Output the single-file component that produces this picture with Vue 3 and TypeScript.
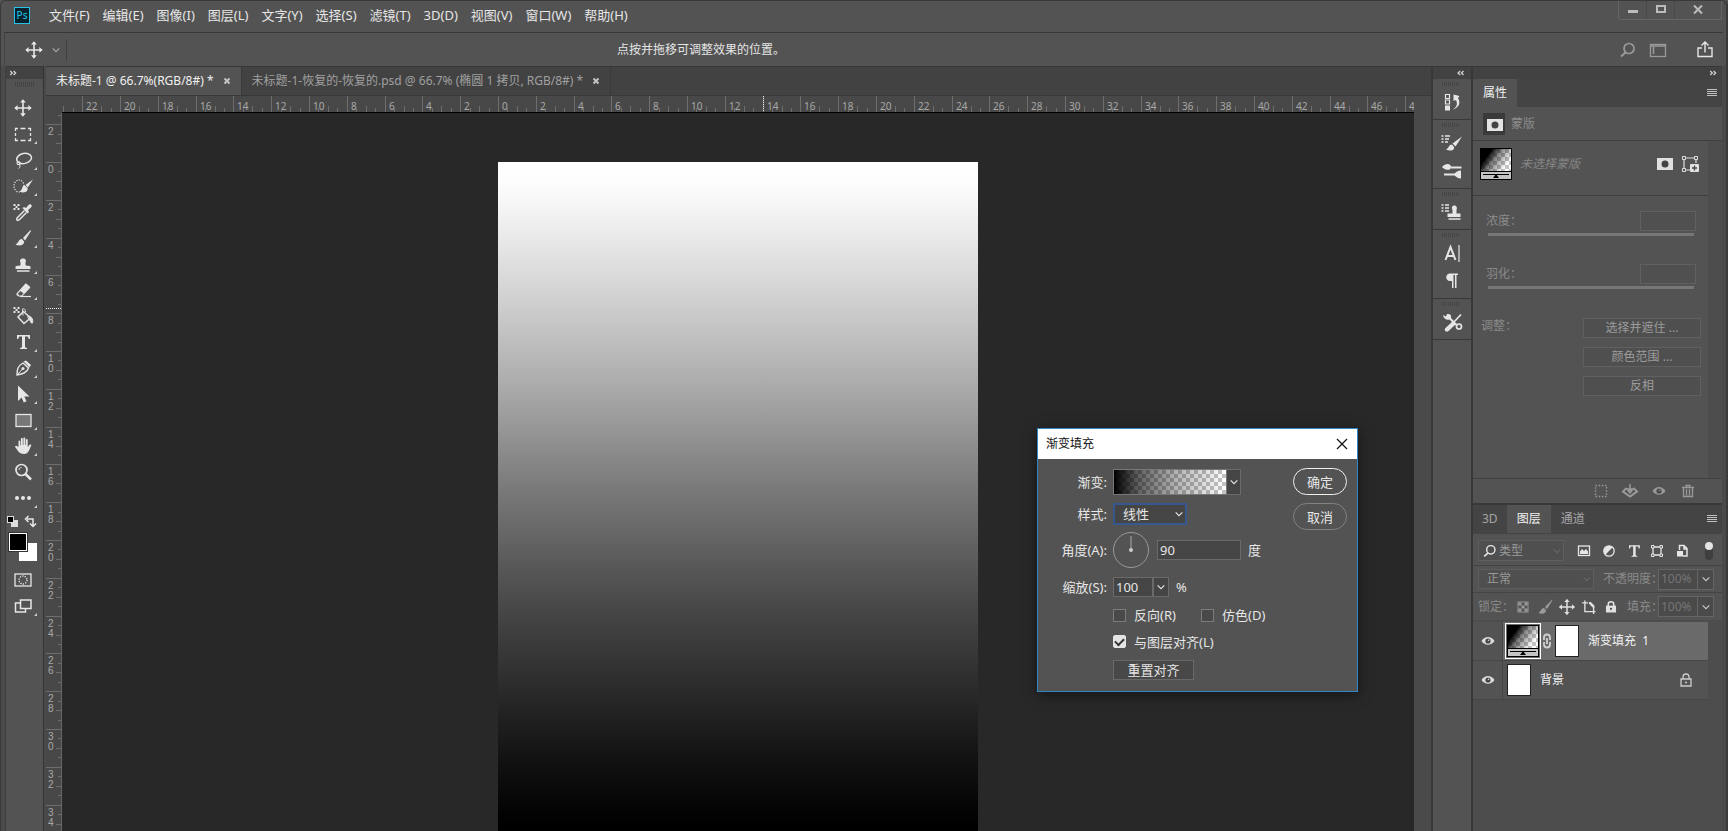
<script setup lang="ts">
import { computed, onBeforeUnmount, onMounted, ref } from 'vue'

const icons: Record<string, string> = {
  move: '<path d="M12 4v16M4 12h16" stroke="currentColor" stroke-width="1.6"/><path d="M12 1.500l3.500 4h-7zM12 22.500l3.500-4h-7zM1.500 12l4-3.500v7zM22.500 12l-4-3.500v7z" transform="translate(2 2) scale(.83)" fill="currentColor"/>',
  marquee: '<path d="M4.500 9V6.500H7M9.500 6.500h5M17 6.500h2.500V9M4.500 11v3M19.500 11v3M4.500 16v2.500H7M9.500 18.500h5M17 18.500h2.500V16" stroke="currentColor" stroke-width="1.300" fill="none"/>',
  lasso: '<ellipse cx="13" cy="10.500" rx="7.500" ry="5" transform="rotate(-12 13 10)" stroke="currentColor" stroke-width="1.500" fill="none"/><circle cx="7.500" cy="15" r="1.600" stroke="currentColor" fill="none"/><path d="M6 16.500h3.500M8.500 16.500c1 2 .5 3-1 4" stroke="currentColor" fill="none"/>',
  quick: '<ellipse cx="8" cy="12" rx="5" ry="6" stroke="currentColor" stroke-width="1.200" stroke-dasharray="1.200 1.300" fill="none"/><path d="M22 5.500l-7.500 5.500 2.300 2.500z" fill="currentColor"/><path d="M14 11.500c-4 .5-1.500 4-5.500 6 4.500 2 9 .5 8-3.500z" fill="currentColor"/>',
  dropper: '<path d="M2.500 4h2v2h2V4h2v2h-2v2h2v2h-2V8h-2v2h-2V8h2V6h-2z" fill="currentColor"/><path d="M13.500 10.500l-7 7c-.8.800-1 2-.5 2.500s1.700.3 2.500-.5l7-7" stroke="currentColor" stroke-width="1.500" fill="none"/><path d="M11.500 8l1.500-1 2 1 2.500-3c2-2 4.500.5 2.500 2.500l-3 2.500 1 2-1.500 1.500z" fill="currentColor"/>',
  brush: '<path d="M19.500 4L12 12l2 2.500L20 5z" fill="currentColor"/><path d="M11 13c-3.500-.3-3 4-6.500 5.500 4.500 2 9 .5 8.500-3z" fill="currentColor"/>',
  stamp: '<path d="M9.500 10.500C7 5 17 5 14.500 10.500v2.500c0 1 4 .5 5 1.500v2.500h-15v-2.500c1-1 5-.5 5-1.500z" fill="currentColor"/><path d="M6 19h12.500" stroke="currentColor" stroke-width="1.500"/>',
  eraser: '<path d="M5.500 15.500L14 6c.6-.6 1.200-.6 1.800 0l3 2.500c.6.600.6 1.200 0 1.800L11 18.500H7.500l-2-1.500z" fill="currentColor"/><path d="M7 15.500l2.500-2.500 3 2.500L10.500 17.500H8z" fill="#535353"/><path d="M9 18.500h11" stroke="currentColor" stroke-width="1.200"/>',
  bucket: '<path d="M2.500 3h2v2h2V3h2v2h-2v2h2v2h-2V7h-2v2h-2V7h2V5h-2z" fill="currentColor"/><path d="M12.500 7.500l7 6.500-6.500 5.500-6-6.500z" stroke="currentColor" stroke-width="1.500" fill="none"/><path d="M12 11.500L11.500 5c1.500-1 3 .5 3 3M17 12c3 0 5.500 3 4.500 7-2 1-2-3-4.500-5z" stroke="currentColor" fill="none"/><path d="M18.500 12.500c3 1 3.500 4 3 6.500-2 .5-2-2.500-3-4z" fill="currentColor"/>',
  type: '<path d="M6 5h13v4h-1.300c-.3-2-.7-2.400-2.200-2.400h-1.500v10c0 1 .5 1.200 2 1.400V19H9v-1c1.500-.2 2-.4 2-1.400v-10H9.500c-1.500 0-1.900.4-2.200 2.400H6z" fill="currentColor"/>',
  pen: '<path d="M6 19c0-5 .5-9 6-12l5.500 5C16 17 11 18 6 19z" stroke="currentColor" stroke-width="1.400" fill="none"/><path d="M12.500 5.500L15 4.500 20 9l-1.500 2.500z" fill="currentColor"/><path d="M6 19l5.500-6" stroke="currentColor"/><circle cx="12" cy="12.500" r="1.500" fill="currentColor"/>',
  arrow: '<path d="M7 3.500v15.500l3.600-3.600 2.200 5.100 2.700-1.200-2.200-4.800h5.200z" fill="currentColor"/>',
  rect: '<rect x="5" y="6.500" width="15" height="12" stroke="currentColor" stroke-width="1.300" fill="#777"/>',
  hand: '<path d="M7.500 13V7.500c0-1.200 1.800-1.200 1.800 0v3.700h.6V5c0-1.200 1.900-1.200 1.900 0v6h.6V4.500c0-1.200 1.900-1.200 1.900 0V11h.6V6c0-1.200 1.800-1.200 1.800 0v7c.8-.4 1.200-2 2.300-2.500 1-.4 1.500.3 1.100 1.200-1.500 3-2.500 8.300-7 8.300-5 0-6-3-8.800-6.700-.8-1 .6-2 1.500-1.200z" fill="currentColor"/>',
  zoom: '<circle cx="10.500" cy="10" r="5.500" stroke="currentColor" stroke-width="1.700" fill="none"/><path d="M8 10c0-1.500 1-2.500 2.500-2.500" stroke="currentColor" fill="none"/><path d="M14.500 14l5.500 5.500" stroke="currentColor" stroke-width="2.500"/>',
  dots: '<circle cx="6" cy="12" r="2" fill="currentColor"/><circle cx="12" cy="12" r="2" fill="currentColor"/><circle cx="18" cy="12" r="2" fill="currentColor"/>',
  quickmask: '<rect x="4" y="6" width="16" height="12" stroke="currentColor" stroke-width="1.300" fill="none"/><circle cx="12" cy="12" r="4" stroke="currentColor" stroke-width="1.300" stroke-dasharray="1.300 1.200" fill="none"/>',
  screen: '<rect x="4.500" y="9" width="10" height="9" stroke="currentColor" stroke-width="1.500" fill="none"/><rect x="9.500" y="6" width="10.500" height="8.500" stroke="currentColor" stroke-width="1.500" fill="#535353"/>',
  history: '<path d="M5.500 4.500h4v4h-4zM5.500 10h4v4h-4z" stroke="currentColor" stroke-width="1.200" fill="none"/><path d="M5 15.500h5v5H5z" fill="currentColor"/><path d="M13 19.500c4.500-3 4.500-6 3-9.500l-2.500 1V4.500l6 1.500-1.500 2c3 5 1 9.500-5 11.500z" fill="currentColor"/>',
  brushset: '<path d="M1.500 5h2M5 5h5M1.500 8h2M5 8h4M1.500 11h2M5 11h3" stroke="currentColor" stroke-width="1.500"/><path d="M22 5.500l-9.500 7 3 3z" fill="currentColor"/><path d="M12 13.500c-3.500 0-2.500 3.500-6 5 4.500 2 9 1 8-2.500z" fill="currentColor"/>',
  brushes: '<path d="M2 8c3-4 9-4 9 0s-6 3.500-9 0z" fill="currentColor"/><path d="M11 8.500h10.500M4 15.500h11" stroke="currentColor" stroke-width="2"/><path d="M14 15.500c1-2 4-4 7-4v8c-3 0-6-2-7-4z" fill="currentColor"/>',
  clone: '<path d="M1.500 5h2M5 5h4M1.500 8h2M5 8h4M1.500 11h2M5 11h4" stroke="currentColor" stroke-width="1.500"/><path d="M12.500 10c-3-6 6.500-6 4 0v3.500h4V17h-13v-3.500h5z" fill="currentColor"/><path d="M8.500 19h12" stroke="currentColor" stroke-width="1.500"/>',
  character: '<path d="M5.500 19L10.500 6l5 13M7.500 15h6" stroke="currentColor" stroke-width="2" fill="none"/><path d="M19 4v17" stroke="currentColor" stroke-width="1.200"/>',
  paragraph: '<path d="M18 4.500H10c-5 0-5 7.500 0 7.500h2V19h1.500V6H15v13h1.500V6H18z" fill="currentColor"/>',
  wrench: '<path d="M21 4.500l-8 8.500" stroke="currentColor" stroke-width="1.700"/><path d="M12.500 11.500l3 3-7 6.500c-2.500 2-5-1-3-3zM3 5l3 1.500L7 4c4-.5 4.500 2 4 4l6 6-1.500 1.500-6-6c-3 1-6-1-6.500-4.500z" fill="currentColor"/><circle cx="19" cy="16.500" r="2.500" stroke="currentColor" stroke-width="1.700" fill="none"/>',
  search: '<circle cx="13" cy="10.500" r="5" stroke="currentColor" stroke-width="1.700" fill="none"/><path d="M9.500 14.500l-4.500 4" stroke="currentColor" stroke-width="2"/>',
  workspace: '<rect x="4.500" y="6.500" width="15" height="12" stroke="currentColor" stroke-width="1.300" fill="none"/><path d="M7.500 9v7M5 8h14" stroke="currentColor" stroke-width="1.500"/>',
  share: '<path d="M9 10H5v8.500h14V10h-4M12 14.500V4M8.500 7.500L12 4l3.500 3.500" stroke="currentColor" stroke-width="1.400" fill="none"/>',
  mask: '<rect x="4" y="6" width="16" height="12" fill="currentColor"/><circle cx="12" cy="12" r="3.500" fill="#444"/>',
  vector: '<path d="M6 8v8M8 6h9M18 8v3M8 18h4" stroke="currentColor" stroke-width="1.200"/><path d="M4.500 4.500h3v3h-3zM16.500 4.500h3v3h-3zM4.500 16.500h3v3h-3z" stroke="currentColor" fill="none"/><rect x="12" y="12" width="9" height="8" rx="1" fill="currentColor"/><path d="M16.500 13.500v5M14 16h5" stroke="#444" stroke-width="1.300"/>',
  loadsel: '<rect x="6.500" y="6.500" width="11" height="11" stroke="currentColor" stroke-width="1.400" stroke-dasharray="1.500 1.643" fill="none"/>',
  apply: '<path d="M8.500 9L5 12.500l7 5 7-5L15.500 9" stroke="currentColor" stroke-width="2" fill="none"/><path d="M12 5v7M9 10l3 4 3-4z" stroke="currentColor" stroke-width="1.500" fill="currentColor"/>',
  eye: '<path d="M5.500 12c3.500-5.500 9.500-5.500 13 0-3.500 5-9.500 5-13 0z" fill="currentColor"/><circle cx="12" cy="12" r="2.600" fill="#484848"/><circle cx="12.600" cy="11.300" r=".8" fill="currentColor"/>',
  trash: '<path d="M6 8.500h12M10 8V6.500h4V8M7.500 9v8.500h9V9M10.500 10v6.500M13.500 10v6.500" stroke="currentColor" stroke-width="1.300" fill="none"/>',
  pixel: '<rect x="6.500" y="7" width="11" height="9.500" stroke="currentColor" stroke-width="1.300" fill="none"/><path d="M8 15v-2.500l2-2.500 2 2 2-2 2 2.500V15z" fill="currentColor"/>',
  adjust: '<circle cx="12" cy="12" r="5.200" fill="none" stroke="currentColor" stroke-width="1.300"/><path d="M15.700 8.300A5.200 5.200 0 1 0 8.300 15.700z" fill="currentColor"/>',
  shape: '<path d="M8 8h8v8H8z" stroke="currentColor" stroke-width="1.300" fill="none"/><path d="M6.500 6.500h2.500V9H6.500zM15 6.500h2.500V9H15zM6.500 15h2.500v2.500H6.500zM15 15h2.500v2.500H15z" stroke="currentColor" fill="#535353"/>',
  smart: '<path d="M9.500 11V6.500H14l3 3v7.500h-4M14 6.500V10h3" stroke="currentColor" stroke-width="1.500" fill="none"/><rect x="7" y="12" width="6" height="5.500" fill="currentColor"/>',
  checker: '<rect x="6.500" y="6.500" width="11" height="11" fill="none" stroke="currentColor"/><path d="M7 7h3.300v3.300H7zM13.700 7H17v3.300h-3.300zM10.300 10.300h3.400v3.400h-3.400zM7 13.700h3.300V17H7zM13.700 13.700H17V17h-3.300z" fill="currentColor"/>',
  crop: '<path d="M7.500 5v12h11.500M4.500 7.500H11M17 13v6.500" stroke="currentColor" stroke-width="1.500" fill="none"/><path d="M12 6.500h2l4 4v2.500h-1.500l-4.500-4.500z" fill="currentColor"/>',
  lock: '<path d="M9 11V9c0-3.500 6-3.500 6 0v2" stroke="currentColor" stroke-width="1.700" fill="none"/><path d="M6.500 10.500h11V18h-11z" fill="currentColor"/><circle cx="12" cy="14" r="1.200" fill="#444"/>',
  lockline: '<path d="M9 11V9c0-4 6-4 6 0v2M7 11h10v7H7z" stroke="currentColor" stroke-width="1.300" fill="none"/><circle cx="12" cy="14.500" r="1" fill="currentColor"/>',
  link: '<path d="M9 11V8.500c0-4 6-4 6 0V11M9 13v2.500c0 4 6 4 6 0V13M12 9v6" stroke="currentColor" stroke-width="1.800" fill="none"/>',
  chevron: '<path d="M8 10l4 4 4-4" stroke="currentColor" stroke-width="1.300" fill="none"/>',
  fast: '<path d="M7.500 9.500l2.500 2.500-2.500 2.500M11.500 9.500L14 12l-2.500 2.500" stroke="currentColor" stroke-width="1.600" fill="none"/>',
  rewind: '<path d="M11 9.500L8.500 12l2.500 2.500M15 9.500L12.500 12l2.500 2.500" stroke="currentColor" stroke-width="1.600" fill="none"/>',
  menu: '<path d="M7 8.500h10M7 10.500h10M7 12.500h10M7 14.500h10" stroke="currentColor"/>',
  swap: '<path d="M9 9h6v6M10.500 6L7.500 9l3 3M12 13.500l3 3 3-3" stroke="currentColor" stroke-width="1.500" fill="none"/>',
  defaults: '<rect x="10" y="10" width="7" height="7" fill="#ddd"/><rect x="6.500" y="6.500" width="6" height="6" fill="#000" stroke="#ddd"/>',
  close: '<path d="M9.500 9.500l5 5M14.500 9.500l-5 5" stroke="currentColor" stroke-width="2"/>',
  winmin: '<rect x="7" y="12" width="10" height="3" fill="currentColor"/>',
  winmax: '<rect x="8" y="8" width="8" height="6" stroke="currentColor" stroke-width="2" fill="none"/>',
  winclose: '<path d="M8 7.500l8 8M16 7.500l-8 8" stroke="currentColor" stroke-width="2"/>',
  cross: '<path d="M7 7l10 10M17 7L7 17" stroke="currentColor" stroke-width="1.200"/>',
}

const menus = ['文件(F)', '编辑(E)', '图像(I)', '图层(L)', '文字(Y)', '选择(S)', '滤镜(T)', '3D(D)', '视图(V)', '窗口(W)', '帮助(H)']

interface Tool { icon: string; label: string; more: boolean }
const tools: Tool[] = [
  { icon: 'move', label: '移动工具', more: false },
  { icon: 'marquee', label: '矩形选框工具', more: true },
  { icon: 'lasso', label: '套索工具', more: true },
  { icon: 'quick', label: '快速选择工具', more: true },
  { icon: 'dropper', label: '吸管工具', more: false },
  { icon: 'brush', label: '画笔工具', more: true },
  { icon: 'stamp', label: '仿制图章工具', more: true },
  { icon: 'eraser', label: '橡皮擦工具', more: true },
  { icon: 'bucket', label: '油漆桶工具', more: false },
  { icon: 'type', label: '横排文字工具', more: true },
  { icon: 'pen', label: '钢笔工具', more: true },
  { icon: 'arrow', label: '路径选择工具', more: true },
  { icon: 'rect', label: '矩形工具', more: true },
  { icon: 'hand', label: '抓手工具', more: true },
  { icon: 'zoom', label: '缩放工具', more: false },
  { icon: 'dots', label: '编辑工具栏', more: true },
]
const dock = [['history'], ['brushset', 'brushes'], ['clone'], ['character', 'paragraph'], ['wrench']]

const DOC_WIDTH = 480
const DOC_TOP = 49
const STEP = 37.8

const stage = ref<HTMLElement | null>(null)
const stageWidth = ref(1351)
const stageHeight = ref(718)
let observer: ResizeObserver | undefined
onMounted(() => {
  const el = stage.value
  if (!el) return
  observer = new ResizeObserver(() => {
    stageWidth.value = el.clientWidth
    stageHeight.value = el.clientHeight
  })
  observer.observe(el)
})
onBeforeUnmount(() => observer?.disconnect())

interface Tick { pos: number; label: string; size: number }
function ticks(zero: number, length: number): Tick[] {
  const list: Tick[] = []
  const first = Math.ceil((-zero / STEP) * 4)
  const last = Math.floor(((length - zero) / STEP) * 4)
  for (let i = first; i <= last; i++) {
    const major = i % 4 === 0
    list.push({
      pos: Math.round(zero + (i * STEP) / 4),
      label: major ? String(Math.abs(i / 4) * 2) : '',
      size: major ? 16 : i % 2 === 0 ? 6 : 4,
    })
  }
  return list
}
const hTicks = computed(() => ticks((stageWidth.value - DOC_WIDTH) / 2, stageWidth.value))
const vTicks = computed(() => ticks(DOC_TOP, stageHeight.value))

const density = ref('')
const feather = ref('')
const angle = ref('90')
const scale = ref('100')
const reverse = ref(false)
const dither = ref(false)
const align = ref(true)
</script>

<template>
  <div class="app">
    <header class="menubar">
      <span class="logo">Ps</span>
      <nav class="menus">
        <button v-for="m in menus" :key="m" type="button">{{ m }}</button>
      </nav>
      <div class="window-controls">
        <button type="button" aria-label="最小化"><svg viewBox="0 0 24 24" v-html="icons.winmin" /></button>
        <button type="button" aria-label="最大化"><svg viewBox="0 0 24 24" v-html="icons.winmax" /></button>
        <button type="button" class="wide" aria-label="关闭"><svg viewBox="0 0 24 24" v-html="icons.winclose" /></button>
      </div>
    </header>

    <div class="options">
      <button type="button" class="current-tool" aria-label="移动工具">
        <svg viewBox="0 0 24 24" v-html="icons.move" />
        <svg class="arrow-down" viewBox="0 0 24 24" v-html="icons.chevron" />
      </button>
      <p class="hint">点按并拖移可调整效果的位置。</p>
      <div class="option-actions">
        <button type="button" class="dim" aria-label="搜索"><svg viewBox="0 0 24 24" v-html="icons.search" /></button>
        <button type="button" class="dim" aria-label="工作区"><svg viewBox="0 0 24 24" v-html="icons.workspace" /></button>
        <button type="button" class="share" aria-label="共享"><svg viewBox="0 0 24 24" v-html="icons.share" /></button>
      </div>
    </div>

    <div class="workspace">
      <aside class="toolbar">
        <div class="strip"><svg viewBox="0 0 24 24" v-html="icons.fast" /></div>
        <div class="grip"></div>
        <button v-for="t in tools" :key="t.icon" type="button" class="tool" :class="{ more: t.more }" :aria-label="t.label">
          <svg viewBox="0 0 24 24" v-html="icons[t.icon]" />
        </button>
        <div class="color-tools">
          <button type="button" aria-label="默认颜色"><svg viewBox="0 0 24 24" v-html="icons.defaults" /></button>
          <button type="button" aria-label="切换颜色"><svg viewBox="0 0 24 24" v-html="icons.swap" /></button>
        </div>
        <div class="swatches">
          <button type="button" class="swatch back" aria-label="背景色"></button>
          <button type="button" class="swatch fore" aria-label="前景色"></button>
        </div>
        <button type="button" class="tool" aria-label="快速蒙版"><svg viewBox="0 0 24 24" v-html="icons.quickmask" /></button>
        <button type="button" class="tool more" aria-label="屏幕模式"><svg viewBox="0 0 24 24" v-html="icons.screen" /></button>
      </aside>

      <main class="editor">
        <div class="doc-tabs">
          <div class="doc-tab active">
            <span>未标题-1 @ 66.7%(RGB/8#) *</span>
            <button type="button" aria-label="关闭标签"><svg viewBox="0 0 24 24" v-html="icons.close" /></button>
          </div>
          <div class="doc-tab">
            <span>未标题-1-恢复的-恢复的.psd @ 66.7% (椭圆 1 拷贝, RGB/8#) *</span>
            <button type="button" aria-label="关闭标签"><svg viewBox="0 0 24 24" v-html="icons.close" /></button>
          </div>
        </div>
        <div class="view">
          <div class="corner"></div>
          <svg class="ruler-h">
            <g v-for="t in hTicks" :key="t.pos">
              <line :x1="t.pos + 0.5" :x2="t.pos + 0.5" :y1="16 - t.size" y2="16" />
              <text v-if="t.label" :x="t.pos + 4" y="14">{{ t.label }}</text>
            </g>
            <line class="marker" x1="701.5" x2="701.5" y1="0" y2="16" />
          </svg>
          <svg class="ruler-v">
            <g v-for="t in vTicks" :key="t.pos">
              <line :x1="16 - t.size" x2="16" :y1="t.pos + 0.5" :y2="t.pos + 0.5" />
              <text v-if="t.label"><tspan v-for="(c, i) in t.label" :key="i" x="2" :y="t.pos + 11 + i * 10">{{ c }}</tspan></text>
            </g>
            <line class="marker" x1="0" x2="16" y1="195.5" y2="195.5" />
          </svg>
          <div ref="stage" class="stage">
            <div class="document"></div>
            <form class="dialog" @submit.prevent>
              <div class="dialog-title">
                <h2>渐变填充</h2>
                <button type="button" aria-label="关闭"><svg viewBox="0 0 24 24" v-html="icons.cross" /></button>
              </div>
              <div class="dialog-body">
                <div class="fields">
                  <span class="label">渐变:</span>
                  <div class="row">
                    <button type="button" class="gradient" aria-label="编辑渐变"></button>
                    <button type="button" class="drop tall" aria-label="选择渐变"><svg viewBox="0 0 24 24" v-html="icons.chevron" /></button>
                  </div>
                  <label class="label" for="style">样式:</label>
                  <div class="row">
                    <div class="select focus">
                      <select id="style"><option>线性</option></select>
                      <svg viewBox="0 0 24 24" v-html="icons.chevron" />
                    </div>
                  </div>
                  <label class="label" for="angle">角度(A):</label>
                  <div class="row">
                    <svg class="dial" viewBox="0 0 36 36">
                      <circle cx="18" cy="18" r="17.5" fill="none" stroke="#999" />
                      <path d="M18 4v14" stroke="#aaa" />
                      <circle cx="18" cy="18" r="2" fill="#ccc" />
                    </svg>
                    <input id="angle" v-model="angle" class="angle" type="text" />
                    <span class="unit">度</span>
                  </div>
                  <label class="label" for="scale">缩放(S):</label>
                  <div class="row">
                    <input id="scale" v-model="scale" class="scale" type="text" />
                    <button type="button" class="drop" aria-label="缩放值"><svg viewBox="0 0 24 24" v-html="icons.chevron" /></button>
                    <span class="unit">%</span>
                  </div>
                  <div class="row full">
                    <label class="check first"><input v-model="reverse" type="checkbox" />反向(R)</label>
                    <label class="check"><input v-model="dither" type="checkbox" />仿色(D)</label>
                  </div>
                  <div class="row full">
                    <label class="check"><input v-model="align" type="checkbox" />与图层对齐(L)</label>
                  </div>
                  <div class="row full"><button type="button" class="reset">重置对齐</button></div>
                </div>
                <div class="dialog-actions">
                  <button type="submit" class="primary">确定</button>
                  <button type="button">取消</button>
                </div>
              </div>
            </form>
          </div>
        </div>
      </main>

      <aside class="dock">
        <div class="strip end"><svg viewBox="0 0 24 24" v-html="icons.rewind" /></div>
        <div v-for="(group, g) in dock" :key="g" class="dock-group">
          <button v-for="name in group" :key="name" type="button" :aria-label="name"><svg viewBox="0 0 24 24" v-html="icons[name]" /></button>
        </div>
      </aside>

      <aside class="panels">
        <div class="strip end"><svg viewBox="0 0 24 24" v-html="icons.fast" /></div>
        <section class="properties">
          <div class="panel-tabs">
            <button type="button" class="active">属性</button>
            <button type="button" class="panel-menu" aria-label="面板菜单"><svg viewBox="0 0 24 24" v-html="icons.menu" /></button>
          </div>
          <div class="mask-kind">
            <span class="mask-badge"><svg viewBox="0 0 24 24" v-html="icons.mask" /></span>
            <span>蒙版</span>
          </div>
          <div class="prop-body">
            <div class="mask-target">
              <span class="thumb"><i class="thumb-gradient"></i><i class="thumb-slider"></i></span>
              <em>未选择蒙版</em>
              <button type="button" aria-label="添加像素蒙版"><svg viewBox="0 0 24 24" v-html="icons.mask" /></button>
              <button type="button" aria-label="添加矢量蒙版"><svg viewBox="0 0 24 24" v-html="icons.vector" /></button>
            </div>
            <div class="slider-field">
              <label for="density">浓度：</label>
              <input id="density" v-model="density" type="text" disabled />
              <input type="range" aria-label="浓度" disabled />
            </div>
            <div class="slider-field">
              <label for="feather">羽化：</label>
              <input id="feather" v-model="feather" type="text" disabled />
              <input type="range" aria-label="羽化" disabled />
            </div>
            <div class="refine">
              <span>调整：</span>
              <div class="refine-buttons">
                <button type="button" disabled>选择并遮住 ...</button>
                <button type="button" disabled>颜色范围 ...</button>
                <button type="button" disabled>反相</button>
              </div>
            </div>
          </div>
          <div class="prop-footer">
            <button type="button" aria-label="载入选区"><svg viewBox="0 0 24 24" v-html="icons.loadsel" /></button>
            <button type="button" aria-label="应用蒙版"><svg viewBox="0 0 24 24" v-html="icons.apply" /></button>
            <button type="button" aria-label="停用蒙版"><svg viewBox="0 0 24 24" v-html="icons.eye" /></button>
            <button type="button" aria-label="删除蒙版"><svg viewBox="0 0 24 24" v-html="icons.trash" /></button>
          </div>
        </section>

        <section class="layers">
          <div class="panel-tabs">
            <button type="button" class="narrow">3D</button>
            <button type="button" class="active">图层</button>
            <button type="button">通道</button>
            <button type="button" class="panel-menu" aria-label="面板菜单"><svg viewBox="0 0 24 24" v-html="icons.menu" /></button>
          </div>
          <div class="filter-row">
            <div class="select kind">
              <svg class="glass" viewBox="0 0 24 24" v-html="icons.search" />
              <select aria-label="筛选类型" disabled><option>类型</option></select>
              <svg viewBox="0 0 24 24" v-html="icons.chevron" />
            </div>
            <div class="filters">
              <button v-for="n in ['pixel', 'adjust', 'type', 'shape', 'smart']" :key="n" type="button" :class="n" :aria-label="n"><svg viewBox="0 0 24 24" v-html="icons[n]" /></button>
            </div>
            <span class="toggle"><i></i></span>
          </div>
          <div class="blend-row">
            <div class="select blend">
              <select aria-label="混合模式" disabled><option>正常</option></select>
              <svg viewBox="0 0 24 24" v-html="icons.chevron" />
            </div>
            <label for="opacity">不透明度：</label>
            <div class="amount">
              <input id="opacity" type="text" value="100%" disabled />
              <button type="button" aria-label="不透明度滑块"><svg viewBox="0 0 24 24" v-html="icons.chevron" /></button>
            </div>
          </div>
          <div class="blend-row lock-row">
            <span class="lock-label">锁定：</span>
            <button v-for="n in ['checker', 'brush', 'move', 'crop', 'lock']" :key="n" type="button" :class="n" :aria-label="n"><svg viewBox="0 0 24 24" v-html="icons[n]" /></button>
            <label for="fill">填充：</label>
            <div class="amount">
              <input id="fill" type="text" value="100%" disabled />
              <button type="button" aria-label="填充滑块"><svg viewBox="0 0 24 24" v-html="icons.chevron" /></button>
            </div>
          </div>
          <ul class="layer-list">
            <li class="layer selected">
              <button type="button" class="vis" aria-label="可见性"><svg viewBox="0 0 24 24" v-html="icons.eye" /></button>
              <span class="thumb framed"><i class="thumb-gradient"></i><i class="thumb-slider"></i></span>
              <svg class="link" viewBox="4 0 16 24" v-html="icons.link" />
              <span class="sheet"></span>
              <span class="name">渐变填充&nbsp; 1</span>
            </li>
            <li class="layer">
              <button type="button" class="vis" aria-label="可见性"><svg viewBox="0 0 24 24" v-html="icons.eye" /></button>
              <span class="sheet"></span>
              <span class="name">背景</span>
              <svg class="locked" viewBox="0 0 24 24" v-html="icons.lockline" />
            </li>
          </ul>
        </section>
      </aside>
    </div>
  </div>
</template>

<style>
body {
  margin: 0;
  background: #535353;
}
</style>

<style scoped>
.app {
  box-sizing: border-box;
  display: flex;
  flex-direction: column;
  height: 100vh;
  overflow: hidden;
  border: solid #3a3a3a;
  border-width: 1px 2px 0 1px;
  border-radius: 6px 6px 0 0;
  background: #535353;
  color: #e6e6e6;
  font: 12px/16px "Noto Sans", "Noto Sans CJK SC", sans-serif;
}
.app * {
  box-sizing: border-box;
}
button,
input,
select {
  margin: 0;
  padding: 0;
  border: 0;
  border-radius: 0;
  background: none;
  color: inherit;
  font: inherit;
  appearance: none;
  outline: none;
  opacity: 1;
}
button {
  display: flex;
  align-items: center;
  justify-content: center;
  flex: none;
}
svg {
  display: block;
  flex: none;
  width: 24px;
  height: 24px;
}
.dim {
  color: #9a9a9a;
}

/* Menu bar */
.menubar {
  display: flex;
  align-items: flex-start;
  flex: none;
  height: 31px;
  padding: 0 4px 0 13px;
}
.logo {
  width: 16px;
  height: 17px;
  margin: 6px 19px 0 0;
  border: 1px solid #26c3e6;
  background: #07222c;
  color: #26c9ee;
  font-size: 10px;
  line-height: 15px;
  text-align: center;
}
.menus {
  display: flex;
  gap: 13px;
  height: 28px;
  font-size: 13px;
}
.window-controls {
  display: flex;
  height: 19px;
  margin-left: auto;
  border: solid #656565;
  border-width: 0 1px 1px;
  border-radius: 0 0 3px 3px;
  color: #bbb;
}
.window-controls button {
  width: 28px;
  border-right: 1px solid #494949;
}
.window-controls .wide {
  width: 46px;
  border: 0;
}

/* Options bar */
.options {
  display: flex;
  align-items: center;
  justify-content: space-between;
  flex: none;
  height: 34px;
  margin: 0 3px;
  padding: 0 6px 0 16px;
  border-top: 1px solid #383838;
  border-left: 1px solid #444;
}
.current-tool {
  width: 46px;
  height: 22px;
  border-right: 1px solid #404040;
}
.arrow-down {
  width: 20px;
  height: 20px;
  color: #aaa;
}
.hint {
  margin: 0 auto 0 550px;
}
.option-actions {
  display: flex;
  gap: 6px;
}
.option-actions .share {
  margin-left: 17px;
}

/* Workspace columns */
.workspace {
  display: flex;
  flex: 1;
  min-height: 0;
  padding: 0 4px;
  background: #4a4a4a;
}
.strip {
  display: flex;
  align-items: center;
  flex: none;
  height: 13px;
  border-top: 1px solid #383838;
  background: #424242;
  color: #d0d0d0;
}
.strip.end {
  justify-content: flex-end;
}
.strip svg {
  width: 20px;
  height: 20px;
}
.panels .strip svg {
  margin-right: -2px;
}
.toolbar {
  display: flex;
  flex-direction: column;
  align-items: stretch;
  flex: none;
  width: 39px;
  border-right: 1px solid #333;
  border-left: 1px solid #404040;
  background: #535353;
}
.toolbar .strip svg {
  margin-left: -2px;
}
.grip {
  width: 20px;
  height: 5px;
  margin: 3px auto 8px;
  background: repeating-linear-gradient(90deg, #454545 0 1px, #535353 1px 2px);
}
.tool {
  position: relative;
  height: 26px;
  padding-right: 4px;
}
.more::after {
  content: "";
  position: absolute;
  right: 6px;
  bottom: 3px;
  width: 3px;
  height: 3px;
  background: #ccc;
  clip-path: polygon(100% 0, 100% 100%, 0 100%);
}
.color-tools {
  display: flex;
  justify-content: space-between;
  align-items: center;
  height: 22px;
  padding-right: 6px;
}
.color-tools button {
  width: 14px;
}
.swatches {
  display: grid;
  grid-template: 28px / 28px;
  margin: 0 3px 6px;
}
.swatch {
  grid-area: 1 / 1;
  width: 18px;
  height: 18px;
}
.fore {
  border: 1px solid #fff;
  outline: 1px solid #333;
  background: #000;
}
.back {
  place-self: end;
  background: #fff;
}

/* Documents and rulers */
.editor {
  display: flex;
  flex-direction: column;
  flex: 1;
  min-width: 0;
  margin-left: 2px;
  padding-right: 17px;
}
.doc-tabs {
  display: flex;
  flex: none;
  height: 30px;
  margin-right: -17px;
  border-top: 1px solid #383838;
  border-bottom: 1px solid #383838;
  background: #424242;
}
.doc-tab {
  display: flex;
  align-items: center;
  gap: 3px;
  padding: 0 4px 0 10px;
  border-right: 1px solid #3a3a3a;
  color: #a0a0a0;
}
.doc-tab.active {
  background: #535353;
  color: #f0f0f0;
}
.doc-tab button {
  width: 20px;
  color: #c4c4c4;
}
.view {
  display: grid;
  grid-template: 17px minmax(0, 1fr) / 16px minmax(0, 1fr);
  flex: 1;
  min-height: 0;
}
.corner,
.ruler-h,
.ruler-v {
  background: #484848;
}
.ruler-h,
.ruler-v {
  width: 100%;
  height: 100%;
  overflow: hidden;
}
.ruler-h {
  border-bottom: 1px solid #000;
}
.ruler-v {
  border-right: 1px solid #666;
}
.view line {
  stroke: #6e6e6e;
}
.view .marker {
  stroke: #eee;
  stroke-dasharray: 1 1;
}
.view text {
  fill: #a8a8a8;
  font-size: 10px;
}
.ruler-v text {
  font-family: "Liberation Sans", sans-serif;
}
.stage {
  position: relative;
  display: flex;
  justify-content: center;
  padding-top: 49px;
  background: #282828;
}
.document {
  width: 480px;
  background: linear-gradient(#fff 0, #fdfdfd 20px, #f6f6f6 42px, #e4e4e4 88px, #d2d2d2 134px, #bebebe 180px, #aaa 226px, #949494 271px, #7e7e7e 317px, #6a6a6a 363px, #565656 409px, #444 455px, #343434 501px, #282828 535px, #141414 592px, #060606 638px, #000 666px);
}

/* Gradient fill dialog */
.dialog {
  position: absolute;
  top: 315px;
  right: 56px;
  width: 321px;
  border: 1px solid #2f86c6;
  background: #535353;
  box-shadow: 0 3px 12px rgba(0, 0, 0, 0.5);
  font-size: 13px;
}
.dialog-title {
  display: flex;
  align-items: center;
  justify-content: space-between;
  height: 30px;
  padding: 0 3px 0 8px;
  background: #fff;
  color: #111;
}
.dialog-title h2 {
  margin: 0;
  font-size: 12px;
  font-weight: 400;
}
.dialog-body {
  display: flex;
  justify-content: space-between;
  padding: 9px 10px 10px 8px;
}
.fields {
  display: grid;
  grid-template: 28px 36px 36px 38px 18px 35px 22px / 61px auto;
  column-gap: 6px;
}
.label {
  align-self: center;
  text-align: right;
  white-space: nowrap;
}
.row {
  display: flex;
  align-items: center;
}
.full {
  grid-column: 2;
}
.gradient {
  width: 114px;
  height: 26px;
  border: 1px solid #777;
  background:
    linear-gradient(90deg, #000, rgba(0, 0, 0, 0.62) 22%, rgba(0, 0, 0, 0.3) 55%, rgba(0, 0, 0, 0)),
    conic-gradient(#fff 25%, #c4c4c4 0 50%, #fff 0 75%, #c4c4c4 0) 0 0 / 8px 8px;
}
.drop {
  width: 16px;
  height: 20px;
  border: 1px solid #6a6a6a;
  background: #454545;
}
.drop.tall {
  width: 14px;
  height: 26px;
  border-left: 0;
}
.drop svg,
.select svg,
.amount svg {
  width: 20px;
  height: 20px;
}
.select {
  position: relative;
  display: flex;
  align-items: center;
  border: 1px solid #5e5e5e;
  background: #4f4f4f;
}
.select select {
  width: 100%;
  padding-left: 8px;
}
.select svg {
  position: absolute;
  right: -4px;
  pointer-events: none;
}
.focus {
  width: 74px;
  height: 22px;
  border: 2px solid #37588f;
  background: #454545;
}
.dial {
  width: 36px;
  height: 36px;
}
.dialog input[type="text"] {
  height: 20px;
  padding-left: 2px;
  border: 1px solid #6a6a6a;
  background: #454545;
}
.dialog .angle {
  width: 84px;
  margin-left: 8px;
}
.dialog .scale {
  width: 40px;
  border-right: 0;
}
.unit {
  margin-left: 7px;
}
.check {
  display: flex;
  align-items: center;
  gap: 8px;
}
.check.first {
  width: 88px;
}
.check input {
  display: grid;
  place-items: center;
  width: 13px;
  height: 13px;
  border: 1px solid #7c7c7c;
  background: #494949;
}
.check input:checked {
  border-color: #e4e4e4;
  border-radius: 2px;
  background: #e4e4e4;
}
.check input:checked::before {
  content: "";
  width: 7px;
  height: 4px;
  margin-bottom: 2px;
  border: solid #333;
  border-width: 0 0 2px 2px;
  rotate: -45deg;
}
.reset {
  width: 81px;
  height: 20px;
  border: 1px solid #686868;
  background: #484848;
}
.dialog-actions {
  display: flex;
  flex-direction: column;
  gap: 8px;
}
.dialog-actions button {
  width: 54px;
  height: 27px;
  border: 1px solid #818181;
  border-radius: 14px;
}
.dialog-actions .primary {
  border-color: #f0f0f0;
}

/* Icon dock */
.dock {
  flex: none;
  width: 41px;
  border-right: 1px solid #383838;
  border-left: 2px solid #383838;
  background: #535353;
}
.dock-group {
  position: relative;
  padding: 9px 0 3px;
  border-bottom: 1px solid #383838;
}
.dock-group::before {
  content: "";
  position: absolute;
  top: 3px;
  left: 9px;
  width: 18px;
  height: 4px;
  background: repeating-linear-gradient(90deg, #464646 0 1px, #535353 1px 2px);
}
.dock-group button {
  width: 100%;
  height: 28px;
}

/* Panels */
.panels {
  display: flex;
  flex-direction: column;
  flex: none;
  width: 250px;
  border-left: 1px solid #383838;
  background: #4d4d4d;
}
.panel-tabs {
  display: flex;
  height: 28px;
  background: #444;
  color: #a4a4a4;
}
.panel-tabs button {
  padding: 0 10px;
}
.panel-tabs .narrow {
  padding: 0 9px;
}
.panel-tabs .active {
  background: #535353;
  color: #f2f2f2;
}
.panel-tabs .panel-menu {
  width: 20px;
  margin-left: auto;
  padding: 0;
  color: #c0c0c0;
}
.mask-kind {
  display: flex;
  align-items: center;
  gap: 6px;
  height: 34px;
  padding-left: 10px;
  border-bottom: 1px solid #404040;
  background: #535353;
  color: #8c8c8c;
}
.mask-badge {
  display: grid;
  place-items: center;
  width: 22px;
  height: 22px;
  background: #3a3a3a;
  color: #e4e4e4;
}
.prop-body {
  height: 337px;
  margin-right: 14px;
  background: #535353;
  color: #8a8a8a;
}
.mask-target {
  display: flex;
  align-items: center;
  height: 55px;
  padding: 0 6px 8px 7px;
  border-bottom: 1px solid #404040;
  color: #e0e0e0;
}
.mask-target em {
  margin: 0 auto 0 8px;
  color: #858585;
}
.mask-target button + button {
  margin-left: 1px;
}
.thumb {
  display: flex;
  flex-direction: column;
  flex: none;
  width: 32px;
  height: 32px;
  border: 1px solid #000;
}
.thumb-gradient {
  flex: 1;
  background:
    linear-gradient(125deg, #000 24%, rgba(0, 0, 0, 0.5) 45%, rgba(0, 0, 0, 0) 82%),
    conic-gradient(#fff 25%, #c4c4c4 0 50%, #fff 0 75%, #c4c4c4 0) 0 0 / 8px 8px;
}
.thumb-slider {
  display: flex;
  justify-content: center;
  height: 8px;
  border-top: 1px solid #000;
  background: linear-gradient(#000 0 0) center 2px / 26px 1px no-repeat #c4c4c4;
}
.thumb-slider::after {
  content: "";
  width: 6px;
  height: 4px;
  margin-top: 2px;
  background: #000;
  clip-path: polygon(50% 0, 100% 100%, 0 100%);
}
.slider-field {
  display: grid;
  grid-template-columns: auto 56px;
  justify-content: space-between;
  align-items: center;
  height: 53px;
  padding: 14px 12px 12px 13px;
}
.slider-field input[type="text"] {
  width: 56px;
  height: 20px;
  border: 1px solid #616161;
  background: #505050;
}
.slider-field input[type="range"] {
  grid-column: 1 / 3;
  width: 206px;
  height: 3px;
  margin-left: 2px;
  background: #777;
}
.slider-field input::-webkit-slider-thumb {
  appearance: none;
  width: 0;
}
.refine {
  display: flex;
  justify-content: space-between;
  padding: 16px 7px 0 8px;
}
.refine-buttons {
  display: flex;
  flex-direction: column;
  gap: 9px;
  width: 118px;
}
.refine-buttons button {
  height: 20px;
  border: 1px solid #606060;
  background: #4f4f4f;
  color: #9c9c9c;
}
.prop-footer {
  display: flex;
  justify-content: flex-end;
  gap: 5px;
  height: 25px;
  padding-right: 22px;
  border-top: 1px solid #404040;
  background: #535353;
  color: #999;
}
.layers {
  display: flex;
  flex-direction: column;
  flex: 1;
  min-height: 0;
  border-top: 2px solid #383838;
}
.filter-row,
.blend-row {
  display: flex;
  align-items: center;
  flex: none;
  background: #535353;
  border-bottom: 1px solid #444;
}
.filter-row {
  height: 33px;
  padding: 2px 9px 0 5px;
  border-top: 1px solid #444;
}
.filters {
  display: flex;
  gap: 1px;
}
.filters .type {
  padding-left: 2px;
}
.kind {
  width: 86px;
  height: 21px;
  margin-right: 8px;
}
.kind select {
  padding-left: 20px;
}
.select select:disabled {
  color: #999;
}
.select select:disabled ~ svg {
  color: #666;
}
.select .glass {
  right: auto;
  left: 1px;
}
.filters .type svg {
  width: 20px;
  height: 20px;
}
.toggle {
  width: 8px;
  height: 18px;
  margin-left: auto;
  border-radius: 4px;
  background: #3f3f3f;
}
.toggle i {
  display: block;
  width: 8px;
  height: 8px;
  border-radius: 50%;
  background: #e4e4e4;
}
.blend-row {
  height: 27px;
  padding: 0 8px 0 5px;
  color: #8a8a8a;
}
.blend {
  width: 116px;
  height: 20px;
}
.blend-row label {
  margin-left: auto;
  white-space: nowrap;
}
.amount {
  display: flex;
  height: 21px;
  margin-left: -5px;
  border: 1px solid #656565;
  background: #4a4a4a;
}
.amount input {
  width: 38px;
  padding-left: 2px;
  color: #757575;
}
.amount button {
  width: 16px;
  border-left: 1px solid #656565;
  color: #ccc;
}
.lock-row {
  border-bottom: 0;
}
.lock-row > button {
  width: 22px;
  color: #e0e0e0;
}
.lock-row > button svg {
  width: 22px;
}
.lock-row .checker,
.lock-row .brush {
  color: #9a9a9a;
}
.lock-label {
  width: 34px;
  white-space: nowrap;
}
.layer-list {
  flex: 1;
  margin: 0;
  padding: 2px 14px 0 0;
  list-style: none;
}
.layer {
  display: flex;
  align-items: center;
  height: 39px;
  border-bottom: 1px solid #464646;
  background: #535353;
}
.layer.selected {
  background: linear-gradient(90deg, #535353 0 29px, #6a6a6a 29px);
}
.vis {
  width: 30px;
  height: 100%;
  margin-right: 4px;
  border-right: 1px solid #464646;
  color: #ddd;
}
.framed {
  outline: 1px solid #fff;
  outline-offset: 1px;
}
.link {
  width: 16px;
  height: 24px;
  color: #d0d0d0;
}
.sheet {
  width: 24px;
  height: 32px;
  border: 1px solid #222;
  background: #fff;
}
.name {
  margin-left: 9px;
  color: #f4f4f4;
}
.locked {
  margin-left: auto;
  margin-right: 10px;
  color: #ccc;
}
</style>
